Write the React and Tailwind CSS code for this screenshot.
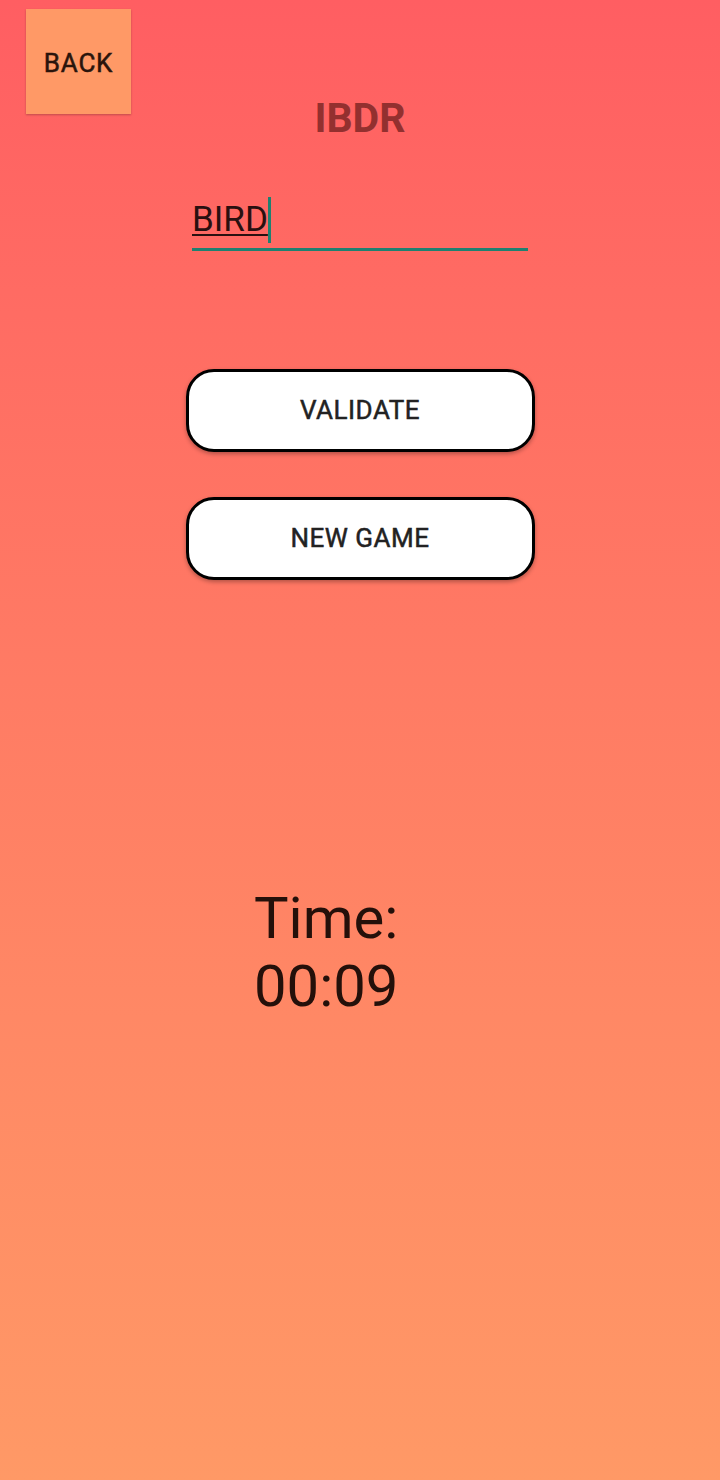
export default function App() {
  return (
    <div
      className="w-[720px] h-[1480px] bg-gradient-to-b from-[#ff5e62] to-[#ff9966] flex flex-col"
      style={{ fontFamily: "Roboto, 'Noto Sans', sans-serif" }}
    >
      <div className="pl-[26px] pt-[9px] h-[114px]">
        <div className="w-[105px] h-[105px] bg-[#ff9966] shadow-[0_1px_2px_rgba(0,0,0,0.25)] flex items-center justify-center text-[#2a140c] text-[26px] tracking-[0.8px] pt-[3px] [-webkit-text-stroke:0.5px_#2a140c]">
          BACK
        </div>
      </div>
      <div className="-mt-[16px] flex justify-center text-[#93302f] text-[41px] font-bold leading-none">
        IBDR
      </div>
      <div className="mt-[56px] flex justify-center">
        <div className="w-[336px] border-b-[3px] border-[#1f8070] h-[56px] flex items-end">
          <span className="text-[#2a1010] text-[35px] leading-none underline underline-offset-[3px] decoration-[1.5px] mb-[11px]">
            BIRD
          </span>
          <span className="w-[3px] h-[46px] bg-[#1f8070] mb-[5px]"></span>
        </div>
      </div>
      <div className="mt-[118px] flex flex-col items-center gap-[45px]">
        <div className="w-[349px] h-[83px] bg-white border-[3px] border-black rounded-[28px] shadow-[0_2px_4px_rgba(0,0,0,0.3)] flex items-center justify-center text-[#222] text-[26px] tracking-[0.5px] [-webkit-text-stroke:0.5px_#222]">
          VALIDATE
        </div>
        <div className="w-[349px] h-[83px] bg-white border-[3px] border-black rounded-[28px] shadow-[0_2px_4px_rgba(0,0,0,0.3)] flex items-center justify-center text-[#222] text-[26px] tracking-[0.5px] [-webkit-text-stroke:0.5px_#222]">
          NEW GAME
        </div>
      </div>
      <div className="mt-[304px] pl-[254px] text-[#24100a] text-[58px] leading-[68px]">
        <div>Time:</div>
        <div>00:09</div>
      </div>
    </div>
  );
}
